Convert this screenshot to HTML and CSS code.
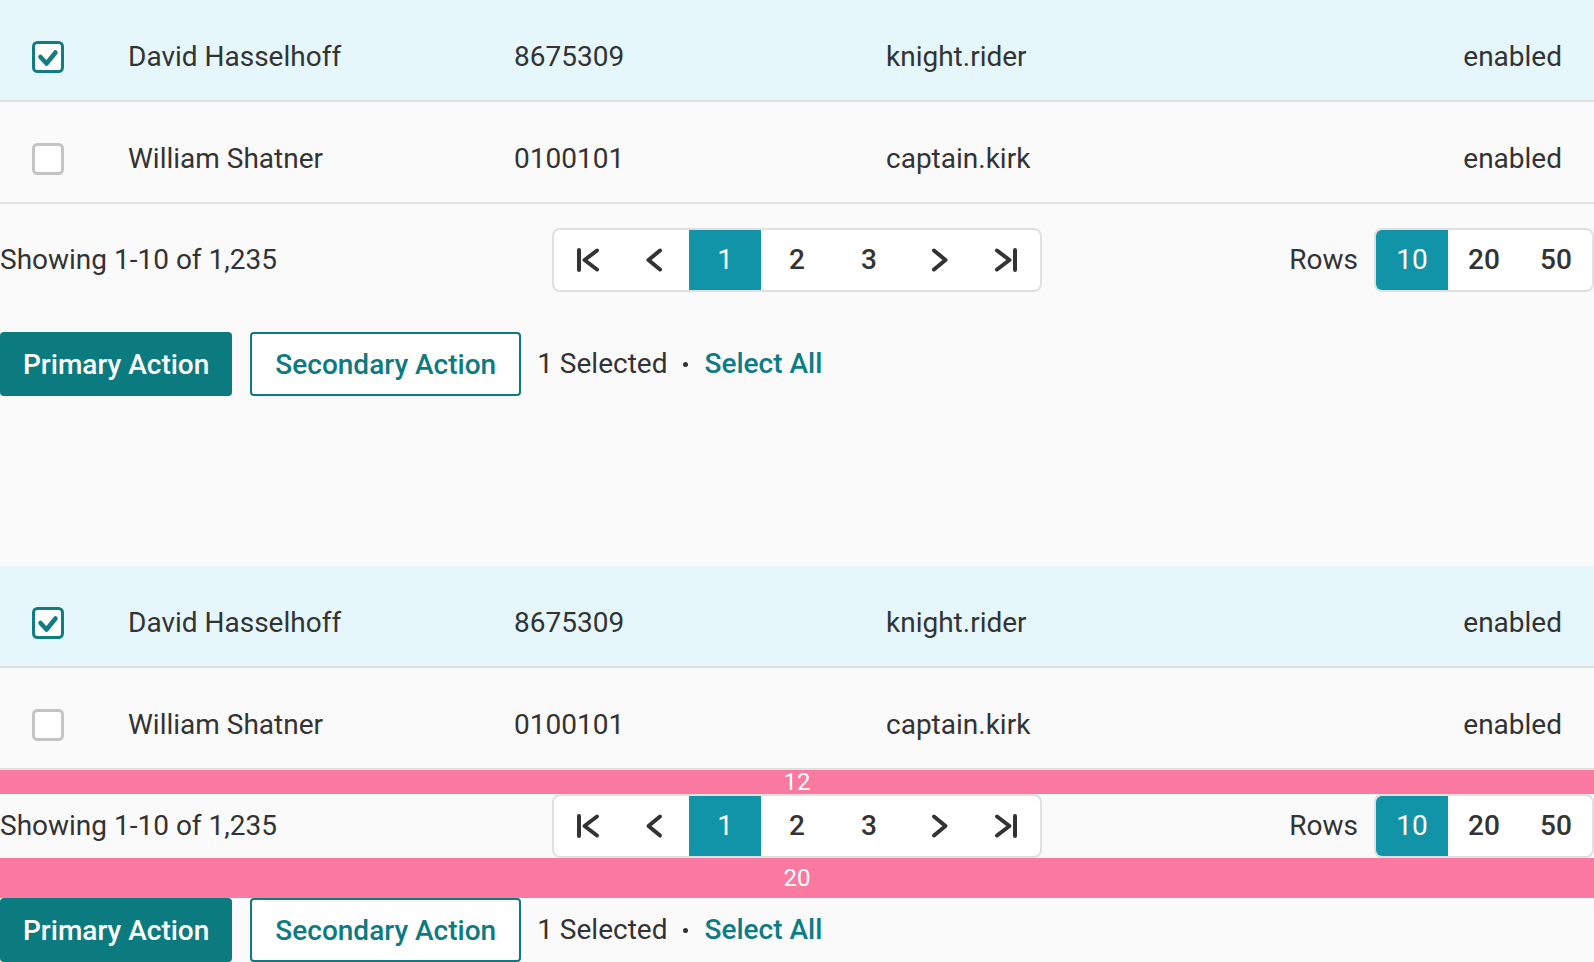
FILE: index.html
```html
<!DOCTYPE html>
<html lang="en">
<head>
<meta charset="utf-8">
<title>Table footer</title>
<link rel="stylesheet" href="styles.css">
</head>
<body>

<section class="demo">
  <div class="row selected">
    <div class="cell cb">
      <svg class="checkbox" viewBox="0 0 32 32"><rect x="1.5" y="1.5" width="29" height="29" rx="4" class="box-on"/><polyline points="8.5,16 14.5,22.5 23.5,11.5" class="tick"/></svg>
    </div>
    <div class="cell">David Hasselhoff</div>
    <div class="cell">8675309</div>
    <div class="cell">knight.rider</div>
    <div class="cell status">enabled</div>
  </div>
  <div class="row">
    <div class="cell cb">
      <svg class="checkbox" viewBox="0 0 32 32"><rect x="1.5" y="1.5" width="29" height="29" rx="4" class="box-off"/></svg>
    </div>
    <div class="cell">William Shatner</div>
    <div class="cell">0100101</div>
    <div class="cell">captain.kirk</div>
    <div class="cell status">enabled</div>
  </div>

  <div class="spacer s12"></div>

  <div class="pager-row">
    <div class="showing">Showing 1-10 of 1,235</div>
    <div class="pager">
      <div class="pcell icon"><svg viewBox="0 0 32 32"><line x1="7" y1="6" x2="7" y2="26"/><polyline points="25,6.5 12.5,16 25,25.5"/></svg></div>
      <div class="pcell icon"><svg viewBox="0 0 32 32"><polyline points="21,6.5 9.5,16 21,25.5"/></svg></div>
      <div class="pcell num active">1</div>
      <div class="pcell num">2</div>
      <div class="pcell num">3</div>
      <div class="pcell icon"><svg viewBox="0 0 32 32"><polyline points="11,6.5 22.5,16 11,25.5"/></svg></div>
      <div class="pcell icon"><svg viewBox="0 0 32 32"><polyline points="7,6.5 19.5,16 7,25.5"/><line x1="25" y1="6" x2="25" y2="26"/></svg></div>
    </div>
    <div class="rows">
      <span class="rows-label">Rows</span>
      <div class="rows-box">
        <div class="pcell num active">10</div>
        <div class="pcell num">20</div>
        <div class="pcell num">50</div>
      </div>
    </div>
  </div>

  <div class="spacer s20"></div>

  <div class="actions">
    <button class="btn primary">Primary Action</button>
    <button class="btn secondary">Secondary Action</button>
    <span class="selected-count">1 Selected</span>
    <span class="dot"></span>
    <a class="select-all">Select All</a>
  </div>
</section>

<section class="demo second">
  <div class="row selected">
    <div class="cell cb">
      <svg class="checkbox" viewBox="0 0 32 32"><rect x="1.5" y="1.5" width="29" height="29" rx="4" class="box-on"/><polyline points="8.5,16 14.5,22.5 23.5,11.5" class="tick"/></svg>
    </div>
    <div class="cell">David Hasselhoff</div>
    <div class="cell">8675309</div>
    <div class="cell">knight.rider</div>
    <div class="cell status">enabled</div>
  </div>
  <div class="row">
    <div class="cell cb">
      <svg class="checkbox" viewBox="0 0 32 32"><rect x="1.5" y="1.5" width="29" height="29" rx="4" class="box-off"/></svg>
    </div>
    <div class="cell">William Shatner</div>
    <div class="cell">0100101</div>
    <div class="cell">captain.kirk</div>
    <div class="cell status">enabled</div>
  </div>

  <div class="spacer s12 marked">12</div>

  <div class="pager-row">
    <div class="showing">Showing 1-10 of 1,235</div>
    <div class="pager">
      <div class="pcell icon"><svg viewBox="0 0 32 32"><line x1="7" y1="6" x2="7" y2="26"/><polyline points="25,6.5 12.5,16 25,25.5"/></svg></div>
      <div class="pcell icon"><svg viewBox="0 0 32 32"><polyline points="21,6.5 9.5,16 21,25.5"/></svg></div>
      <div class="pcell num active">1</div>
      <div class="pcell num">2</div>
      <div class="pcell num">3</div>
      <div class="pcell icon"><svg viewBox="0 0 32 32"><polyline points="11,6.5 22.5,16 11,25.5"/></svg></div>
      <div class="pcell icon"><svg viewBox="0 0 32 32"><polyline points="7,6.5 19.5,16 7,25.5"/><line x1="25" y1="6" x2="25" y2="26"/></svg></div>
    </div>
    <div class="rows">
      <span class="rows-label">Rows</span>
      <div class="rows-box">
        <div class="pcell num active">10</div>
        <div class="pcell num">20</div>
        <div class="pcell num">50</div>
      </div>
    </div>
  </div>

  <div class="spacer s20 marked">20</div>

  <div class="actions">
    <button class="btn primary">Primary Action</button>
    <button class="btn secondary">Secondary Action</button>
    <span class="selected-count">1 Selected</span>
    <span class="dot"></span>
    <a class="select-all">Select All</a>
  </div>
</section>

</body>
</html>
```

FILE: styles.css
```css
html, body {
  margin: 0;
  padding: 0;
  overflow: hidden;
}

body {
  background: #fafafa;
  color: #333333;
  font-family: Roboto, "Liberation Sans", sans-serif;
  font-size: 28px;
  line-height: 1.2;
}

.demo.second {
  margin-top: 170px;
}

/* table rows */
.row {
  display: grid;
  grid-template-columns: 96px 386px 372px 1fr auto;
  align-items: center;
  height: 87px;
  padding-top: 13px;
  border-bottom: 2px solid #e0e0e0;
}

.row.selected {
  background: #e5f7fb;
}

.cell {
  padding: 0 32px;
  white-space: nowrap;
}

.cell.cb {
  padding: 0 0 0 32px;
  display: flex;
}

.cell.status {
  text-align: right;
}

.checkbox {
  width: 32px;
  height: 32px;
  display: block;
}

.box-on {
  fill: #ffffff;
  stroke: #127c83;
  stroke-width: 3;
}

.box-off {
  fill: #ffffff;
  stroke: #c4c4c4;
  stroke-width: 3;
}

.tick {
  fill: none;
  stroke: #127c83;
  stroke-width: 4.5;
  stroke-linecap: round;
  stroke-linejoin: round;
}

/* spacers */
.spacer.s12 {
  height: 24px;
}

.spacer.s20 {
  height: 40px;
}

.spacer.marked {
  background: #fa79a0;
  color: #ffffff;
  font-size: 24px;
  text-align: center;
}

.spacer.s12.marked {
  line-height: 24px;
}

.spacer.s20.marked {
  line-height: 40px;
}

/* pagination */
.pager-row {
  display: grid;
  grid-template-columns: 1fr auto 1fr;
  align-items: center;
  height: 64px;
}

.showing {
  white-space: nowrap;
}

.pager,
.rows-box {
  display: flex;
  box-sizing: border-box;
  height: 64px;
  border: 2px solid #e0e0e0;
  border-radius: 8px;
  background: #ffffff;
  overflow: hidden;
}

.pcell {
  display: flex;
  align-items: center;
  justify-content: center;
  height: 60px;
}

.pcell.icon {
  width: 67.5px;
}

.pcell.num {
  width: 72px;
  font-weight: 500;
  color: #333333;
}

.pcell.active {
  background: #1193a8;
  color: #ffffff;
  font-weight: 400;
}

.pcell.icon svg {
  width: 32px;
  height: 32px;
  fill: none;
  stroke: #333333;
  stroke-width: 4;
  stroke-linecap: round;
  stroke-linejoin: round;
}

.rows {
  justify-self: end;
  display: flex;
  align-items: center;
  gap: 16px;
}

/* actions */
.actions {
  display: flex;
  align-items: center;
  height: 64px;
}

.btn {
  box-sizing: border-box;
  height: 64px;
  padding: 0 23px;
  font-family: inherit;
  font-size: 28px;
  font-weight: 500;
  border-radius: 4px;
  cursor: pointer;
}

.btn.primary {
  background: #0c7b80;
  color: #ffffff;
  border: none;
}

.btn.secondary {
  margin-left: 18px;
  background: #ffffff;
  color: #0c7b80;
  border: 2px solid #0c7b80;
}

.selected-count {
  margin-left: 16px;
}

.dot {
  width: 5px;
  height: 5px;
  border-radius: 50%;
  background: #333333;
  margin: 0 16px;
}

.select-all {
  color: #0e7c86;
  font-weight: 500;
  cursor: pointer;
}
```
